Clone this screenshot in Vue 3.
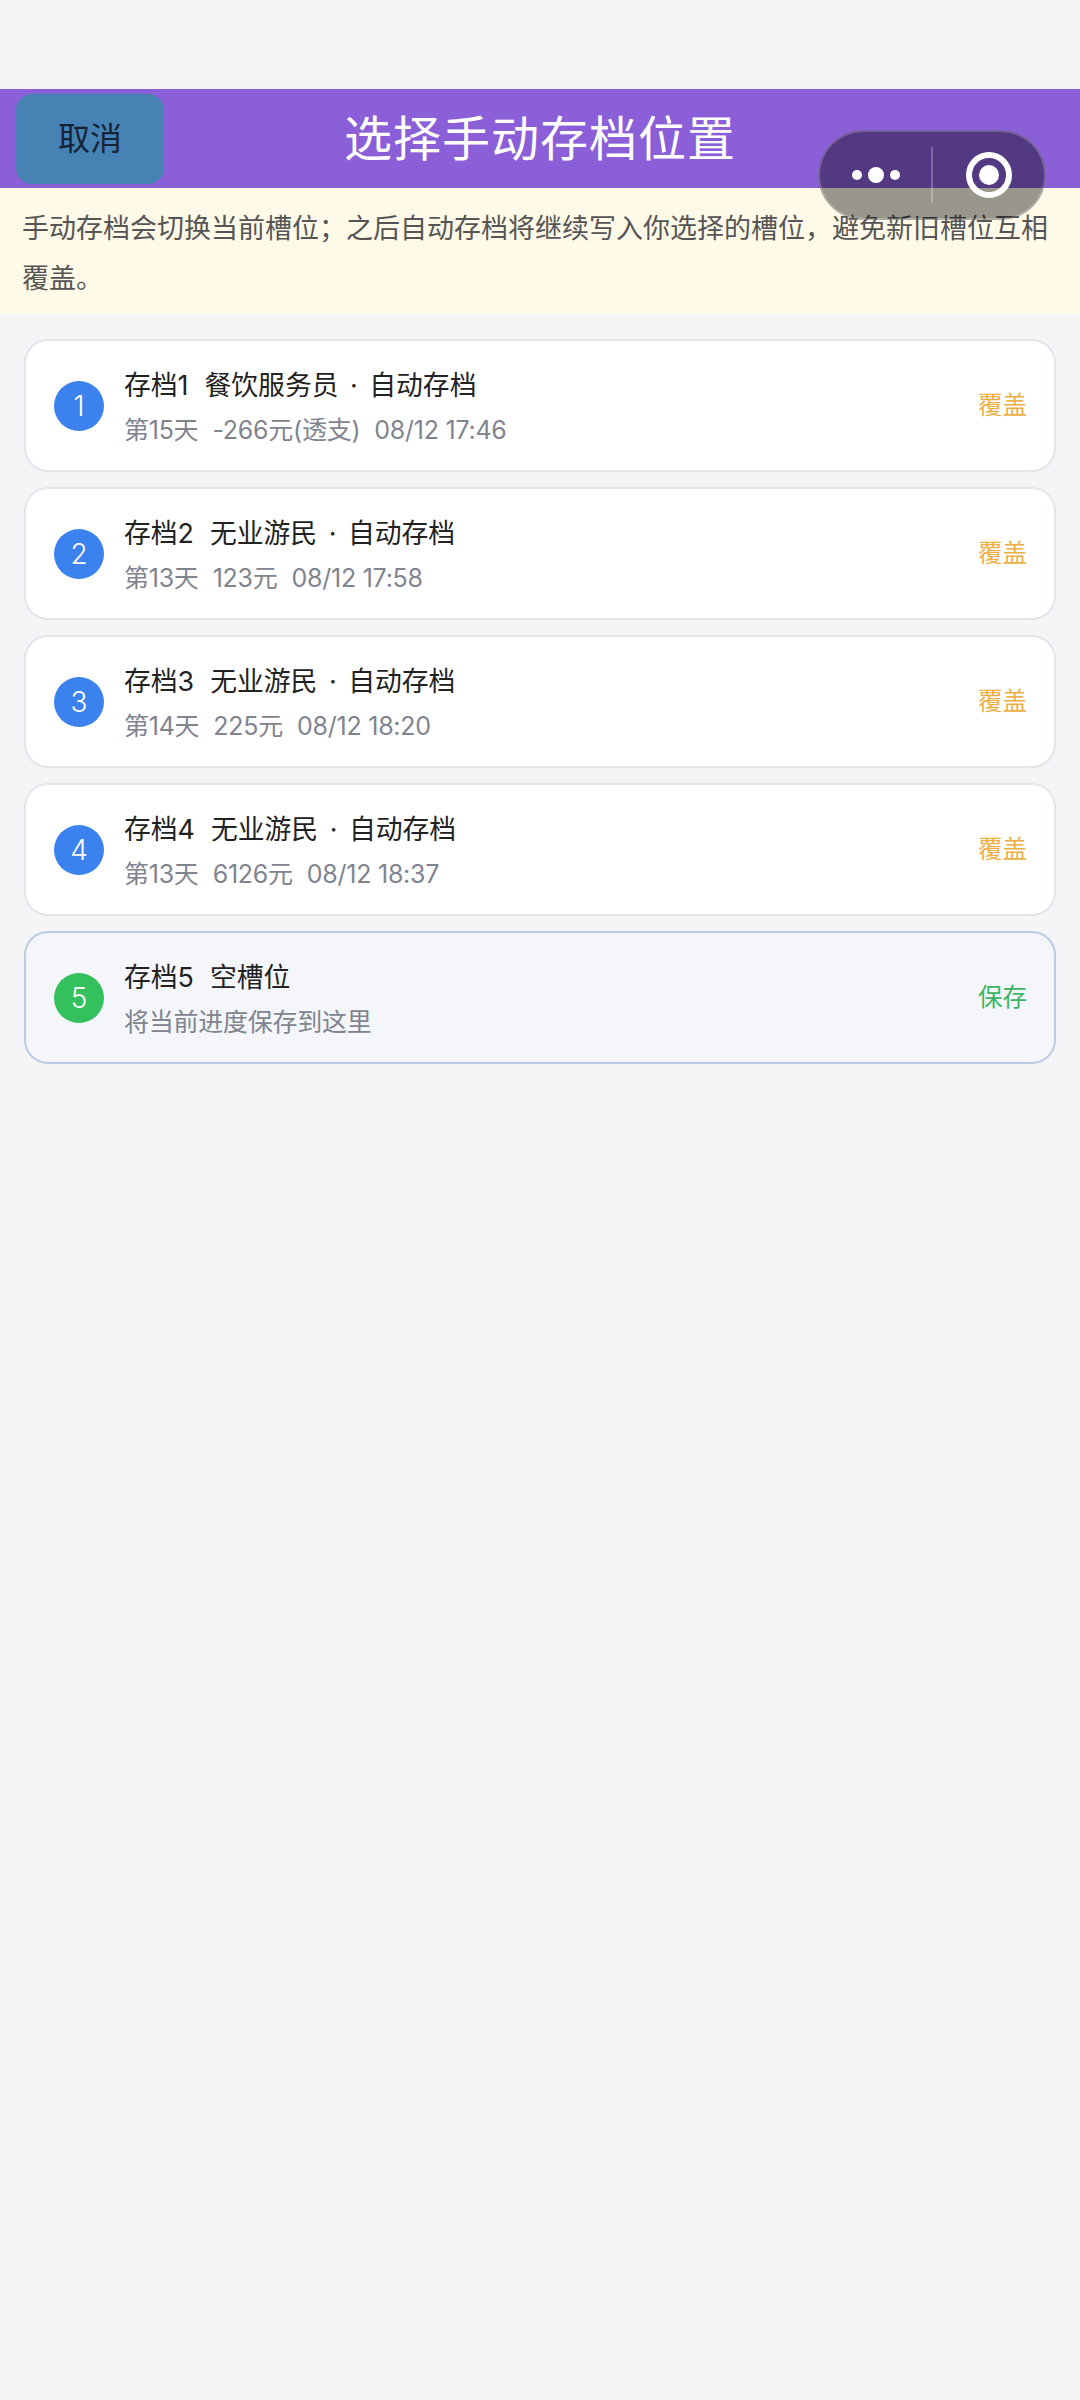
<script setup>
const slots = [
  { id: 1, title: ['存档1', '餐饮服务员 · 自动存档'], info: ['第15天', '-266元(透支)', '08/12 17:46'] },
  { id: 2, title: ['存档2', '无业游民 · 自动存档'], info: ['第13天', '123元', '08/12 17:58'] },
  { id: 3, title: ['存档3', '无业游民 · 自动存档'], info: ['第14天', '225元', '08/12 18:20'] },
  { id: 4, title: ['存档4', '无业游民 · 自动存档'], info: ['第13天', '6126元', '08/12 18:37'] },
  { id: 5, title: ['存档5', '空槽位'], info: ['将当前进度保存到这里'], empty: true }
]
</script>

<template>
  <div class="page">
    <header class="header">
      <div class="header-left">
        <button class="cancel">取消</button>
      </div>
      <h1 class="title">选择手动存档位置</h1>
    </header>

    <div class="capsule">
      <div class="capsule-part">
        <span class="dot"></span>
        <span class="dot big"></span>
        <span class="dot"></span>
      </div>
      <div class="capsule-line"></div>
      <div class="capsule-part">
        <span class="ring"><span class="ring-core"></span></span>
      </div>
    </div>

    <p class="notice">手动存档会切换当前槽位；之后自动存档将继续写入你选择的槽位，避免新旧槽位互相覆盖。</p>

    <div class="list">
      <div v-for="slot in slots" :key="slot.id" class="card" :class="{ empty: slot.empty }">
        <div class="num">{{ slot.id }}</div>
        <div class="body">
          <div class="line name">
            <span v-for="part in slot.title" :key="part">{{ part }}</span>
          </div>
          <div class="line info">
            <span v-for="part in slot.info" :key="part">{{ part }}</span>
          </div>
        </div>
        <div class="action">{{ slot.empty ? '保存' : '覆盖' }}</div>
      </div>
    </div>
  </div>
</template>

<style>
body {
  background: #f5f5f8;
}
</style>

<style scoped>
.page {
  position: relative;
  min-height: 2400px;
  padding-top: 89px;
  box-sizing: border-box;
  background: #f5f5f8;
  font-family: Inter, "Noto Sans CJK SC", sans-serif;
}

.header {
  display: grid;
  grid-template-columns: 1fr auto 1fr;
  align-items: center;
  height: 99px;
  background: #8b5fd8;
}

.header-left {
  padding-left: 16px;
}

.cancel {
  display: block;
  width: 148px;
  height: 90px;
  padding: 0 0 5px;
  border: none;
  border-radius: 16px;
  background: #4682b4;
  color: #152238;
  font-family: inherit;
  font-size: 32px;
}

.title {
  margin: 0;
  color: #fff;
  font-size: 48px;
  font-weight: 400;
  line-height: 60px;
  letter-spacing: 1px;
}

.capsule {
  position: absolute;
  top: 130px;
  left: 818px;
  display: flex;
  align-items: center;
  width: 228px;
  height: 90px;
  box-sizing: border-box;
  border: 2px solid rgba(255, 255, 255, 0.2);
  border-radius: 45px;
  background: rgba(0, 0, 0, 0.4);
}

.capsule-part {
  flex: 1;
  display: flex;
  align-items: center;
  justify-content: center;
  gap: 6px;
}

.capsule-line {
  width: 2px;
  height: 56px;
  background: rgba(255, 255, 255, 0.25);
}

.dot {
  width: 10px;
  height: 10px;
  border-radius: 50%;
  background: #fff;
}

.dot.big {
  width: 16px;
  height: 16px;
}

.ring {
  display: flex;
  align-items: center;
  justify-content: center;
  width: 46px;
  height: 46px;
  box-sizing: border-box;
  border: 6px solid #fff;
  border-radius: 50%;
}

.ring-core {
  width: 20px;
  height: 20px;
  border-radius: 50%;
  background: #fff;
}

.notice {
  margin: 0;
  padding: 16px 22px 10px;
  background: #fffae8;
  color: #555;
  font-size: 27px;
  line-height: 50px;
}

.list {
  display: flex;
  flex-direction: column;
  gap: 15px;
  padding: 25px 24px;
}

.card {
  display: flex;
  align-items: center;
  height: 133px;
  box-sizing: border-box;
  padding: 0 27px 0 28px;
  border: 2px solid #e2e5ec;
  border-radius: 24px;
  background: #fff;
}

.card.empty {
  border-color: #b9cce4;
  background: #f4f6fa;
}

.num {
  flex: none;
  width: 50px;
  height: 50px;
  margin-right: 20px;
  border-radius: 50%;
  background: #3b82ee;
  color: #fff;
  font-size: 28px;
  font-weight: 300;
  line-height: 50px;
  text-align: center;
}

.empty .num {
  background: #34c05c;
}

.body {
  flex: 1;
}

.line {
  display: flex;
  gap: 16px;
}

.name {
  padding-top: 2px;
  color: #222;
  font-size: 26.8px;
  line-height: 40px;
  word-spacing: 4px;
}

.info {
  gap: 14px;
  margin-top: 7px;
  color: #80848f;
  font-size: 25px;
  line-height: 36px;
  letter-spacing: -0.25px;
}

.action {
  padding-bottom: 5px;
  color: #eeae45;
  font-size: 24.5px;
}

.empty .action {
  color: #3cb563;
}
</style>
